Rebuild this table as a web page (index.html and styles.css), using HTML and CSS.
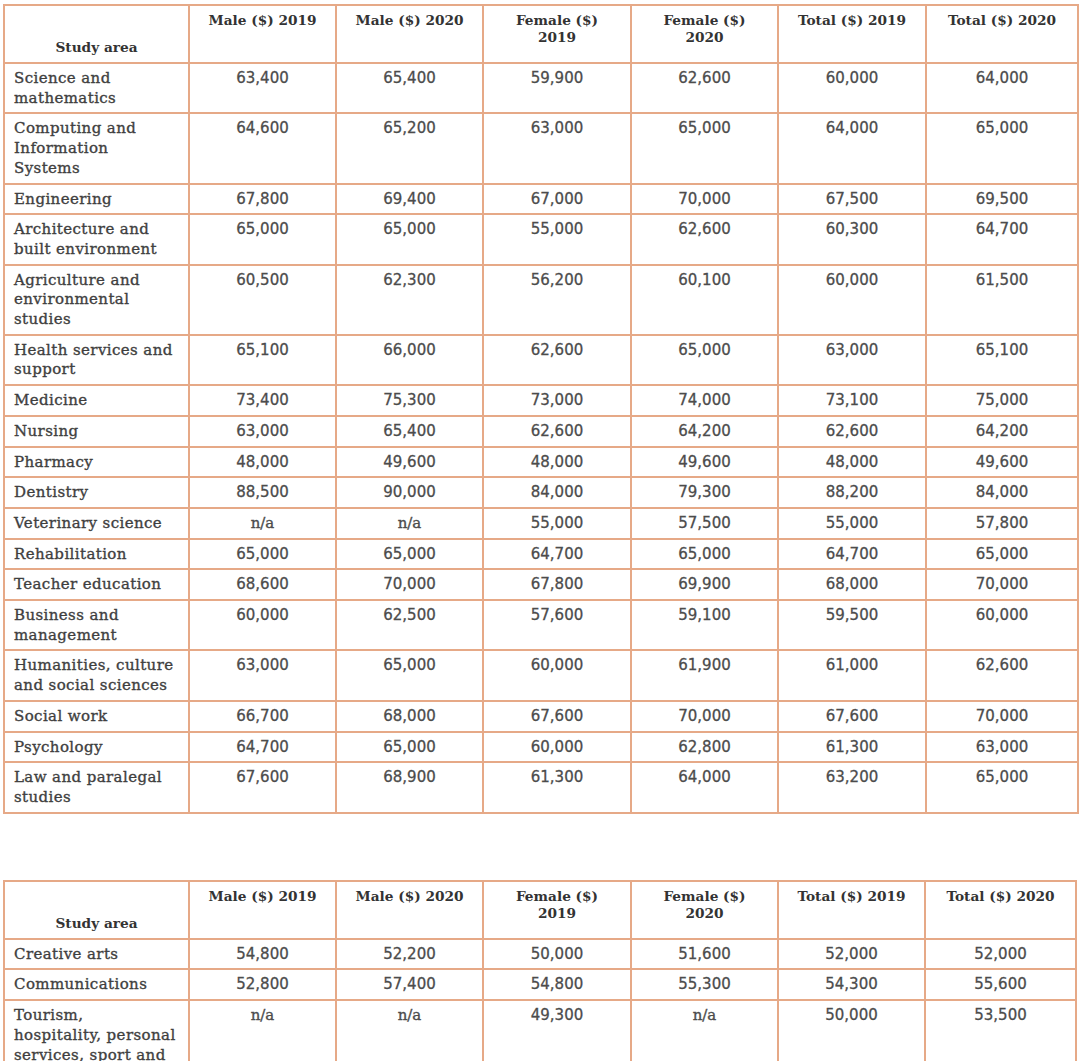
FILE: index.html
```html
<!DOCTYPE html>
<html lang="en">
<head>
<meta charset="utf-8">
<title>Graduate salaries by study area</title>
<link rel="stylesheet" href="styles.css">
</head>
<body>
<div class="page">
<table class="salary">
  <colgroup>
    <col class="c-area"><col class="c-num"><col class="c-num"><col class="c-num3"><col class="c-num"><col class="c-num3"><col class="c-last">
  </colgroup>
  <thead>
    <tr>
      <th class="h-area">Study area</th>
      <th>Male ($) 2019</th>
      <th>Male ($) 2020</th>
      <th>Female ($)<br>2019</th>
      <th>Female ($)<br>2020</th>
      <th>Total ($) 2019</th>
      <th>Total ($) 2020</th>
    </tr>
  </thead>
  <tbody>
    <tr><td class="area">Science and<br>mathematics</td><td>63,400</td><td>65,400</td><td>59,900</td><td>62,600</td><td>60,000</td><td>64,000</td></tr>
    <tr><td class="area">Computing and<br>Information<br>Systems</td><td>64,600</td><td>65,200</td><td>63,000</td><td>65,000</td><td>64,000</td><td>65,000</td></tr>
    <tr><td class="area">Engineering</td><td>67,800</td><td>69,400</td><td>67,000</td><td>70,000</td><td>67,500</td><td>69,500</td></tr>
    <tr><td class="area">Architecture and<br>built environment</td><td>65,000</td><td>65,000</td><td>55,000</td><td>62,600</td><td>60,300</td><td>64,700</td></tr>
    <tr><td class="area">Agriculture and<br>environmental<br>studies</td><td>60,500</td><td>62,300</td><td>56,200</td><td>60,100</td><td>60,000</td><td>61,500</td></tr>
    <tr><td class="area">Health services and<br>support</td><td>65,100</td><td>66,000</td><td>62,600</td><td>65,000</td><td>63,000</td><td>65,100</td></tr>
    <tr><td class="area">Medicine</td><td>73,400</td><td>75,300</td><td>73,000</td><td>74,000</td><td>73,100</td><td>75,000</td></tr>
    <tr><td class="area">Nursing</td><td>63,000</td><td>65,400</td><td>62,600</td><td>64,200</td><td>62,600</td><td>64,200</td></tr>
    <tr><td class="area">Pharmacy</td><td>48,000</td><td>49,600</td><td>48,000</td><td>49,600</td><td>48,000</td><td>49,600</td></tr>
    <tr><td class="area">Dentistry</td><td>88,500</td><td>90,000</td><td>84,000</td><td>79,300</td><td>88,200</td><td>84,000</td></tr>
    <tr><td class="area">Veterinary science</td><td class="na">n/a</td><td class="na">n/a</td><td>55,000</td><td>57,500</td><td>55,000</td><td>57,800</td></tr>
    <tr><td class="area">Rehabilitation</td><td>65,000</td><td>65,000</td><td>64,700</td><td>65,000</td><td>64,700</td><td>65,000</td></tr>
    <tr><td class="area">Teacher education</td><td>68,600</td><td>70,000</td><td>67,800</td><td>69,900</td><td>68,000</td><td>70,000</td></tr>
    <tr><td class="area">Business and<br>management</td><td>60,000</td><td>62,500</td><td>57,600</td><td>59,100</td><td>59,500</td><td>60,000</td></tr>
    <tr><td class="area">Humanities, culture<br>and social sciences</td><td>63,000</td><td>65,000</td><td>60,000</td><td>61,900</td><td>61,000</td><td>62,600</td></tr>
    <tr><td class="area">Social work</td><td>66,700</td><td>68,000</td><td>67,600</td><td>70,000</td><td>67,600</td><td>70,000</td></tr>
    <tr><td class="area">Psychology</td><td>64,700</td><td>65,000</td><td>60,000</td><td>62,800</td><td>61,300</td><td>63,000</td></tr>
    <tr><td class="area">Law and paralegal<br>studies</td><td>67,600</td><td>68,900</td><td>61,300</td><td>64,000</td><td>63,200</td><td>65,000</td></tr>
  </tbody>
</table>

<table class="salary second">
  <colgroup>
    <col class="c-area"><col class="c-num"><col class="c-num"><col class="c-num3"><col class="c-num"><col class="c-num3b"><col class="c-last2">
  </colgroup>
  <thead>
    <tr>
      <th class="h-area">Study area</th>
      <th>Male ($) 2019</th>
      <th>Male ($) 2020</th>
      <th>Female ($)<br>2019</th>
      <th>Female ($)<br>2020</th>
      <th>Total ($) 2019</th>
      <th>Total ($) 2020</th>
    </tr>
  </thead>
  <tbody>
    <tr><td class="area">Creative arts</td><td>54,800</td><td>52,200</td><td>50,000</td><td>51,600</td><td>52,000</td><td>52,000</td></tr>
    <tr><td class="area">Communications</td><td>52,800</td><td>57,400</td><td>54,800</td><td>55,300</td><td>54,300</td><td>55,600</td></tr>
    <tr><td class="area">Tourism,<br>hospitality, personal<br>services, sport and<br>recreation</td><td class="na">n/a</td><td class="na">n/a</td><td>49,300</td><td class="na">n/a</td><td>50,000</td><td>53,500</td></tr>
  </tbody>
</table>
</div>
</body>
</html>
```

FILE: styles.css
```css
html, body {
  margin: 0;
  padding: 0;
  background: #ffffff;
}

.page {
  padding: 4px 3px 0 3px;
  display: flex;
  flex-direction: column;
  gap: 66px;
  align-items: flex-start;
}

.salary {
  border-collapse: collapse;
  table-layout: fixed;
  width: 1074px;
  color: #3f3f3f;
  font-family: "DejaVu Serif", "Liberation Serif", serif;
  font-size: 14px;
}

.second {
  width: 1072px;
}

.c-area { width: 185px; }
.c-num { width: 147px; }
.c-num3 { width: 148px; }
.c-num3b { width: 147px; }
.c-last { width: 152px; }
.c-last2 { width: 151px; }

.salary th,
.salary td {
  border: 2px solid #e6a987;
}

.salary thead tr {
  height: 58px;
}

.salary th {
  font-weight: bold;
  font-size: 13.7px;
  line-height: 17px;
  color: #333333;
  text-align: center;
  vertical-align: top;
  padding: 6px 4px 4px;
}

.salary th.h-area {
  vertical-align: bottom;
  padding-bottom: 6px;
}

.salary td {
  text-align: center;
  vertical-align: top;
  line-height: 19.7px;
  padding: 5px 4px 4px;
  font-family: "DejaVu Sans", "Liberation Sans", sans-serif;
  font-size: 15px;
  color: #4c4c4c;
  -webkit-text-stroke: 0.3px #4c4c4c;
}

.salary td.area {
  text-align: left;
  padding-left: 9px;
  font-family: "DejaVu Serif", "Liberation Serif", serif;
  font-size: 15px;
  letter-spacing: 0.4px;
  color: #3f3f3f;
  -webkit-text-stroke: 0.35px #3f3f3f;
}

.salary td.na {
  font-family: "DejaVu Serif", "Liberation Serif", serif;
  font-size: 15px;
  -webkit-text-stroke: 0.35px #4c4c4c;
}
```
